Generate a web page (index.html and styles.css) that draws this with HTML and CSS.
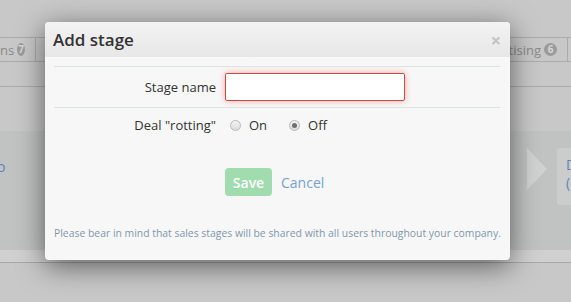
FILE: index.html
```html
<!DOCTYPE html>
<html lang="en">
<head>
  <meta charset="UTF-8">
  <meta name="viewport" content="width=device-width, initial-scale=1.0">
  <title>Pipeline - Add stage</title>
  <link rel="stylesheet" href="styles.css">
</head>
<body>
  <div class="page">
    <div class="tabs">
      <div class="tab tab-cut">ns <span class="badge">7</span></div>
      <div class="tab tab-fill"></div>
      <div class="tab tab-right">Advertising <span class="badge">6</span></div>
      <div class="tab tab-end"></div>
    </div>
    <div class="toolbar"></div>
    <div class="pipeline">
      <div class="stage stage-left">Demo</div>
      <div class="stage-gap"></div>
      <div class="arrow"></div>
      <div class="stage stage-right">Deal<br>(0)</div>
    </div>
    <div class="pipeline-foot"></div>
  </div>

  <div class="modal">
    <div class="modal-header">
      <h3>Add stage</h3>
      <span class="close">&times;</span>
    </div>
    <div class="modal-body">
      <div class="form-row">
        <label for="stageName">Stage name</label>
        <input type="text" id="stageName" class="invalid">
      </div>
      <div class="form-row">
        <label>Deal "rotting"</label>
        <div class="radios">
          <span class="radio"></span><span class="radio-text">On</span>
          <span class="radio checked"></span><span class="radio-text">Off</span>
        </div>
      </div>
      <div class="actions">
        <button type="button" class="btn-save">Save</button>
        <a href="#" class="cancel">Cancel</a>
      </div>
      <p class="note">Please bear in mind that sales stages will be shared with all users throughout your company.</p>
    </div>
  </div>
</body>
</html>
```

FILE: styles.css
```css
body {
  margin: 0;
  background-color: #c8c8c8;
  font-family: "Open Sans", Arial, sans-serif;
  width: 571px;
  height: 302px;
  overflow: hidden;
  position: relative;
}

.page {
  padding-top: 37px;
}

.tabs {
  display: flex;
  height: 23px;
  border-top: 1px solid #ababab;
  border-bottom: 1px solid #ababab;
}

.tab {
  display: flex;
  align-items: center;
  font-size: 13px;
  color: #8a8a8a;
  border-right: 1px solid #ababab;
  white-space: nowrap;
  overflow: hidden;
}

.tab-cut {
  width: 36px;
  justify-content: flex-end;
  padding-right: 10px;
  box-sizing: border-box;
}

.tab-fill {
  width: 430px;
}

.tab-right {
  width: 101px;
  justify-content: flex-end;
  padding-right: 10px;
  box-sizing: border-box;
}

.tab-end {
  flex: 1;
  border-right: none;
}

.badge {
  display: inline-block;
  width: 13px;
  height: 13px;
  line-height: 13px;
  margin-left: 3px;
  border-radius: 50%;
  background: #9b9b9b;
  color: #d8d8d8;
  font-size: 10px;
  font-weight: bold;
  text-align: center;
}

.toolbar {
  height: 24px;
  border-bottom: 1px solid #ababab;
}

.pipeline {
  display: flex;
  align-items: flex-start;
  margin-top: 44px;
  height: 119px;
  background: #c1c3c3;
}

.stage {
  font-size: 14px;
  line-height: 18px;
  color: #5f85b5;
}

.stage-left {
  width: 40px;
  margin-left: -34px;
  padding-top: 27px;
}

.stage-gap {
  flex: 1;
}

.arrow {
  width: 0;
  height: 0;
  margin-top: 17px;
  margin-right: 10px;
  border-top: 21px solid transparent;
  border-bottom: 21px solid transparent;
  border-left: 20px solid #d0d1d1;
}

.stage-right {
  width: 14px;
  height: 57px;
  margin-top: 17px;
  padding: 8px 0 0 9px;
  box-sizing: border-box;
  background: #cbcdcd;
  border-radius: 3px 0 0 3px;
  overflow: hidden;
}

.pipeline-foot {
  height: 12px;
  background: #d0d0d0;
  border-bottom: 1px solid #a8a8a8;
}

/* dialog */
.modal {
  position: absolute;
  left: 45px;
  top: 22px;
  width: 465px;
  height: 238px;
  background: #f7f7f7;
  border-radius: 4px;
  box-shadow: 0 6px 28px rgba(0, 0, 0, 0.55);
  overflow: hidden;
}

.modal-header {
  display: flex;
  align-items: center;
  justify-content: space-between;
  height: 35px;
  padding: 0 9px 0 8px;
  background: linear-gradient(#f3f3f3, #e7e7e7);
}

.modal-header h3 {
  margin: 0;
  font-size: 17px;
  font-weight: 600;
  color: #333;
}

.close {
  font-size: 18px;
  font-weight: bold;
  color: #c3c3c3;
  line-height: 1;
}

.modal-body {
  padding: 9px 10px 0 9px;
}

.form-row {
  display: grid;
  grid-template-columns: 162px 1fr;
  column-gap: 9px;
  align-items: center;
  border-top: 1px solid #dde3e3;
  padding: 6px 0;
}

.form-row + .form-row {
  padding: 4px 0;
}

label {
  text-align: right;
  font-size: 13px;
  color: #333;
}

input {
  width: 180px;
  height: 28px;
  box-sizing: border-box;
  border: 1px solid #d9453f;
  border-radius: 2px;
  background: #fff;
  box-shadow: 0 0 6px rgba(230, 80, 70, 0.45);
  outline: none;
}

.radios {
  display: flex;
  align-items: center;
  height: 26px;
  font-size: 13px;
  color: #333;
}

.radio {
  width: 9px;
  height: 9px;
  border: 1px solid #b9b9b9;
  border-radius: 50%;
  background: linear-gradient(#f4f4f4, #dcdcdc);
  margin: 0 8px 0 5px;
  position: relative;
}

.radio.checked::after {
  content: "";
  position: absolute;
  left: 2px;
  top: 2px;
  width: 5px;
  height: 5px;
  border-radius: 50%;
  background: #707070;
}

.radio-text {
  margin-right: 22px;
}

.radio-text + .radio.checked {
  margin-left: 0;
}

.actions {
  display: flex;
  align-items: center;
  gap: 9px;
  margin-top: 26px;
  padding-left: 171px;
}

.btn-save {
  width: 47px;
  height: 28px;
  padding: 0;
  border: none;
  border-radius: 4px;
  background: #a0dcad;
  color: #fff;
  font-family: inherit;
  font-size: 14px;
  font-weight: 600;
}

.cancel {
  font-size: 14px;
  color: #72a3d3;
  text-decoration: none;
}

.note {
  margin: 30px 0 0;
  font-size: 10.4px;
  color: #7f97ae;
  white-space: nowrap;
}
```
